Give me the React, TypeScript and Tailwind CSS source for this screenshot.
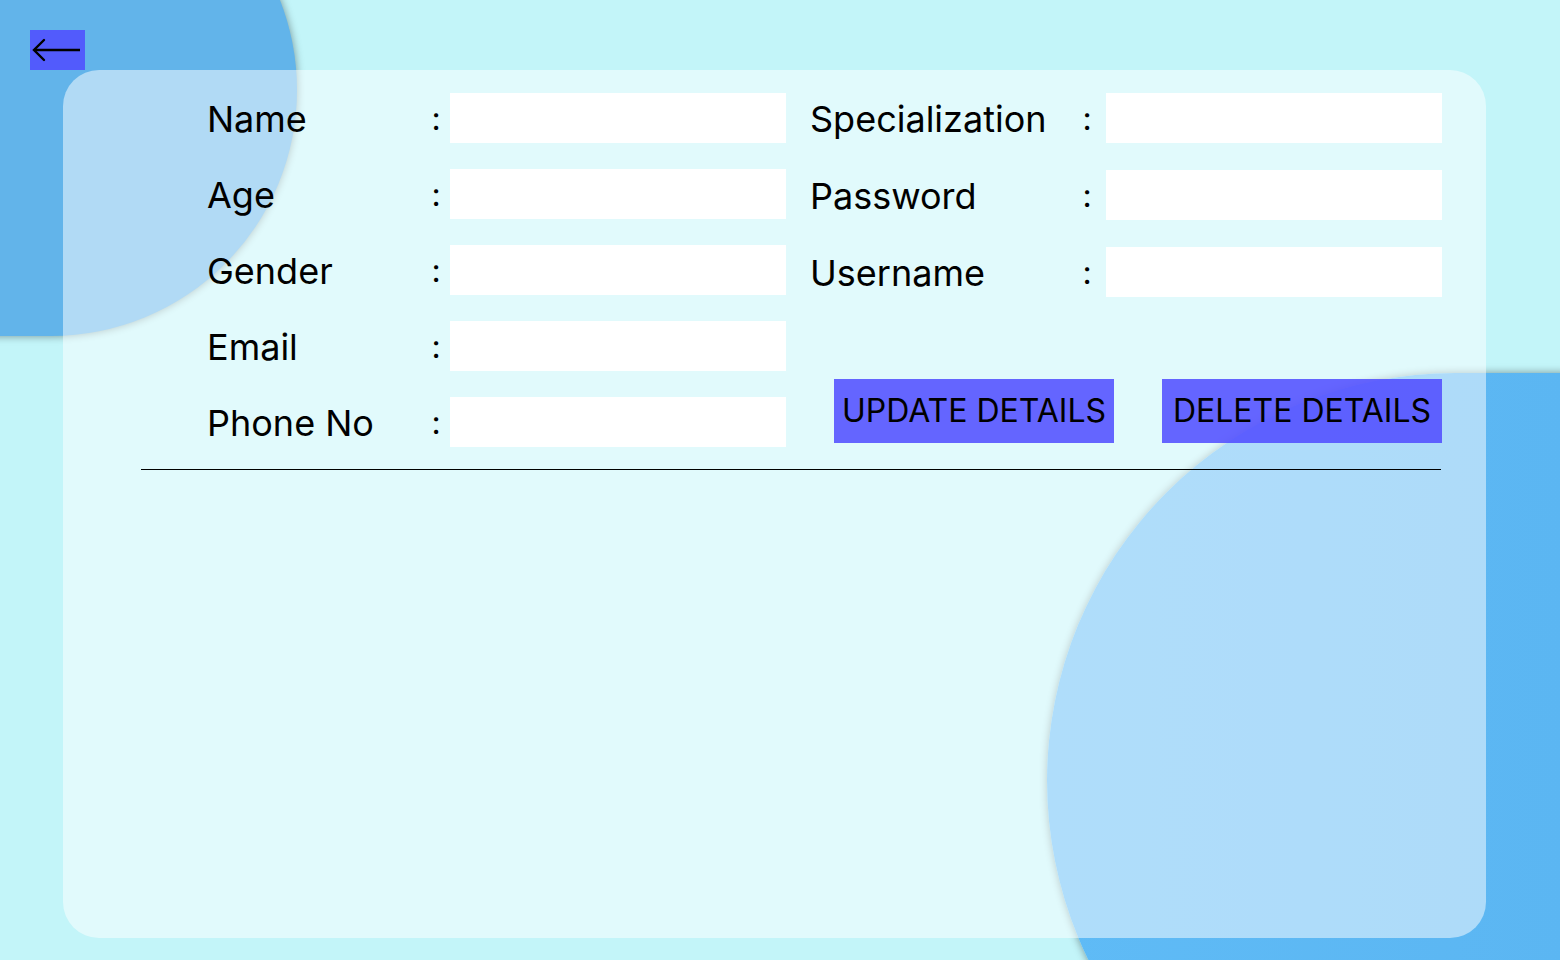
import React from "react";

const leftRows = ["Name", "Age", "Gender", "Email", "Phone No"];
const rightRows = ["Specialization", "Password", "Username"];

function Field({ label, labelW, gap }: { label: string; labelW: string; gap: string }) {
  return (
    <div className="flex items-center h-[50px]">
      <span className={`${labelW} text-[36px] leading-none text-black pt-[2px]`}>{label}</span>
      <span className="w-[14px] text-center text-[32px] leading-none text-black pt-[2px]">:</span>
      <input className={`${gap} w-[336px] h-[50px] bg-white outline-none border-0`} />
    </div>
  );
}

export default function App() {
  return (
    <div className="relative w-full h-[960px] overflow-hidden bg-[#c3f5f9] font-['Inter','Noto_Sans',sans-serif]">
      <div className="absolute left-[-297px] top-[-156px] w-[594px] h-[492px] rounded-full bg-[#62b4ea] shadow-[0_0_9px_rgba(0,0,0,0.4)]" />
      <div className="absolute left-[1047px] top-[373px] w-[920px] h-[816px] rounded-full bg-gradient-to-r from-[#5fbbf6] to-[#58b2ef] shadow-[0_0_9px_rgba(0,0,0,0.4)]" />

      <div className="relative pt-[30px] pl-[30px]">
        <button className="w-[55px] h-[40px] bg-[#4f4cff]/[0.86] flex items-center justify-center">
          <svg width="55" height="40" viewBox="0 0 55 40" fill="none">
            <path d="M4 20 H50" stroke="black" strokeWidth="2.4" />
            <path d="M14 10 L4 20 L14 30" stroke="black" strokeWidth="2.4" strokeLinejoin="miter" strokeLinecap="round" />
          </svg>
        </button>

        <div className="ml-[33px] w-[1423px] h-[868px] rounded-[36px] bg-white/50 pt-[23px]">
          <div className="flex pl-[144px]">
            <div className="flex flex-col gap-[26px]">
              {leftRows.map((l) => (
                <Field key={l} label={l} labelW="w-[222px]" gap="ml-[7px]" />
              ))}
            </div>
            <div className="ml-[24px] flex flex-col">
              <div className="flex flex-col gap-[27px]">
                {rightRows.map((l) => (
                  <Field key={l} label={l} labelW="w-[270px]" gap="ml-[12px]" />
                ))}
              </div>
              <div className="mt-[82px] ml-[24px] flex gap-[48px]">
                <button className="w-[280px] h-[64px] bg-[#4f4cff]/[0.86] text-black text-[32px] leading-none flex items-center justify-center">
                  UPDATE DETAILS
                </button>
                <button className="w-[280px] h-[64px] bg-[#4f4cff]/[0.86] text-black text-[32px] leading-none flex items-center justify-center">
                  DELETE DETAILS
                </button>
              </div>
            </div>
          </div>
          <div className="mt-[22px] ml-[78px] w-[1300px] h-px bg-black" />
        </div>
      </div>
    </div>
  );
}
